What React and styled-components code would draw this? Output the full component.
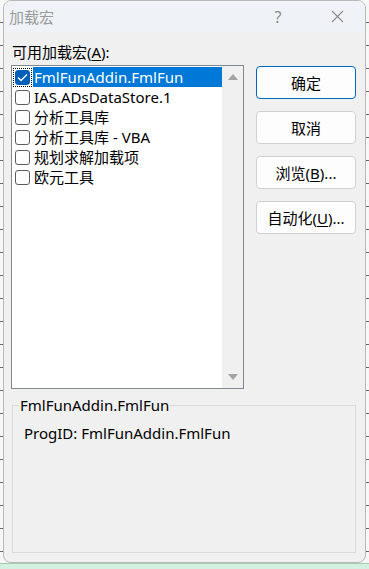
import styled, { createGlobalStyle } from "styled-components";

const GlobalStyle = createGlobalStyle`
  html, body {
    margin: 0;
    padding: 0;
    overflow: hidden;
  }
  body {
    font-family: "Noto Sans", "Noto Sans CJK SC", sans-serif;
    background: #fafafa;
  }
`;

const items = [
  { name: "FmlFunAddin.FmlFun", checked: true, selected: true },
  { name: "IAS.ADsDataStore.1" },
  { name: "分析工具库" },
  { name: "分析工具库 - VBA" },
  { name: "规划求解加载项" },
  { name: "欧元工具" },
];

const Page = styled.div`
  width: 369px;
  height: 569px;
  display: flex;
  flex-direction: column;
  background-color: #f7f7f7;
  background-image: repeating-linear-gradient(
    to bottom,
    transparent 0,
    transparent 22px,
    #6a6a6a 22px,
    #6a6a6a 23px
  );
`;

const Dialog = styled.div`
  width: 361px;
  height: 561px;
  margin-left: 3px;
  border: 1px solid #b9b9b9;
  border-radius: 8px;
  background: #f0f0f0;
  display: flex;
  flex-direction: column;
  overflow: hidden;
`;

const Footer = styled.div`
  flex: 1;
  background: #d3f1e1;
  border-top: 1px solid #a9c9b5;
`;

const TitleBar = styled.div`
  height: 31px;
  background: #eff3f8;
  display: flex;
  align-items: center;
  padding-left: 5px;
  padding-right: 18px;
  color: #9b9b9b;
  font-size: 15px;
`;

const Title = styled.span`
  flex: 1;
`;

const TitleButton = styled.span`
  width: 20px;
  margin-left: ${(p) => p.gap || 0}px;
  display: flex;
  justify-content: center;
  align-items: center;
  color: #8c8c8c;
  font-size: 16px;
`;

const Body = styled.div`
  flex: 1;
  display: flex;
  flex-direction: column;
  padding: 10px 9px 9px 7px;
`;

const Label = styled.div`
  font-size: 15px;
  color: #000;
  line-height: 20px;
  padding-left: 1px;
  margin-bottom: 3px;
`;

const Key = styled.span`
  text-decoration: underline;
  text-underline-offset: 2px;
`;

const MainRow = styled.div`
  display: flex;
  align-items: flex-start;
`;

const ListBox = styled.div`
  width: 231px;
  height: 322px;
  border: 1px solid #828790;
  background: #fff;
  display: flex;
`;

const Rows = styled.div`
  flex: 1;
  padding: 1px 0 0 1px;
`;

const Row = styled.div`
  height: 20px;
  display: flex;
  align-items: center;
`;

const CheckCell = styled.div`
  width: 19px;
  height: 19px;
  margin-right: 1px;
  display: flex;
  align-items: center;
  justify-content: center;
  outline: ${(p) => (p.focus ? "1px dotted #000" : "none")};
  outline-offset: -1px;
`;

const Box = styled.div`
  width: 15px;
  height: 15px;
  box-sizing: border-box;
  border-radius: 3px;
  border: 1px solid ${(p) => (p.checked ? "#005fb8" : "#5d5d5d")};
  background: ${(p) => (p.checked ? "#005fb8" : "#fff")};
  display: flex;
  align-items: center;
  justify-content: center;
`;

const ItemText = styled.div`
  height: 20px;
  line-height: 20px;
  font-size: 15px;
  padding-left: 1px;
  flex: 1;
  color: ${(p) => (p.selected ? "#fff" : "#000")};
  background: ${(p) => (p.selected ? "#0078d7" : "transparent")};
  white-space: nowrap;
`;

const ScrollBar = styled.div`
  width: 21px;
  background: #f0f0f0;
  display: flex;
  flex-direction: column;
  justify-content: space-between;
  align-items: center;
  padding: 8px 0;
  box-sizing: border-box;
`;

const Arrow = styled.div`
  width: 0;
  height: 0;
  border-left: 5px solid transparent;
  border-right: 5px solid transparent;
  ${(p) =>
    p.down
      ? "border-top: 6px solid #a3a3a3;"
      : "border-bottom: 6px solid #a3a3a3;"}
`;

const Buttons = styled.div`
  margin-left: 12px;
  margin-top: 1px;
  display: flex;
  flex-direction: column;
  gap: 12px;
`;

const Button = styled.div`
  width: 100px;
  height: 33px;
  box-sizing: border-box;
  border-radius: 4px;
  border: 1px solid ${(p) => (p.primary ? "#0067c0" : "#d1d1d1")};
  background: #fdfdfd;
  display: flex;
  align-items: center;
  justify-content: center;
  font-size: 15px;
  color: #000;
`;

const Group = styled.fieldset`
  margin: 6px 0 0 1px;
  padding: 8px 0 0 11px;
  border: 1px solid #dadada;
  flex: 1;
  min-width: 0;
`;

const Legend = styled.legend`
  font-size: 15px;
  padding: 0 1px;
  margin-left: -5px;
  color: #000;
`;

const ProgId = styled.div`
  font-size: 15px;
  color: #000;
  line-height: 20px;
`;

const CheckMark = () => (
  <svg width="11" height="9" viewBox="0 0 11 9">
    <path d="M1 4.5 L4 7.5 L10 1.5" fill="none" stroke="#fff" strokeWidth="1.3" />
  </svg>
);

const App = () => {
  return (
    <>
      <GlobalStyle />
      <Page>
        <Dialog>
          <TitleBar>
            <Title>加载宏</Title>
            <TitleButton>?</TitleButton>
            <TitleButton gap={39}>
              <svg width="13" height="13" viewBox="0 0 13 13">
                <path d="M1 1 L12 12 M12 1 L1 12" stroke="#8c8c8c" strokeWidth="1.1" />
              </svg>
            </TitleButton>
          </TitleBar>
          <Body>
            <Label>
              可用加载宏(<Key>A</Key>):
            </Label>
            <MainRow>
              <ListBox>
                <Rows>
                  {items.map((it) => (
                    <Row key={it.name}>
                      <CheckCell focus={it.selected}>
                        <Box checked={it.checked}>{it.checked && <CheckMark />}</Box>
                      </CheckCell>
                      <ItemText selected={it.selected}>{it.name}</ItemText>
                    </Row>
                  ))}
                </Rows>
                <ScrollBar>
                  <Arrow />
                  <Arrow down />
                </ScrollBar>
              </ListBox>
              <Buttons>
                <Button primary>确定</Button>
                <Button>取消</Button>
                <Button>
                  浏览(<Key>B</Key>)...
                </Button>
                <Button>
                  自动化(<Key>U</Key>)...
                </Button>
              </Buttons>
            </MainRow>
            <Group>
              <Legend>FmlFunAddin.FmlFun</Legend>
              <ProgId>ProgID: FmlFunAddin.FmlFun</ProgId>
            </Group>
          </Body>
        </Dialog>
        <Footer />
      </Page>
    </>
  );
};

export default App;
